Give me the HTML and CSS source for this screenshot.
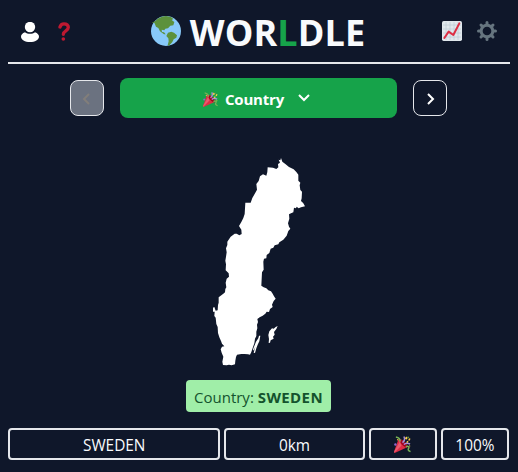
FILE: index.html
```html
<!DOCTYPE html>
<html lang="en">
<head>
<meta charset="utf-8">
<title>Worldle</title>
<link rel="stylesheet" href="styles.css">
</head>
<body>
<svg class="defs" width="0" height="0" aria-hidden="true">
  <symbol id="party" viewBox="0 0 36 36">
    <path fill="#DD2E44" d="M9 8 .2 33c-.6 1.400 1 3.200 2.400 2.600L28 24c1-4-2-8-6-12S13 5 9 8z"/>
    <path fill="#EA596E" d="M12 12 1 32l-.7 1.800c-.1.600.1 1.200.6 1.600L16 20z"/>
    <path fill="#A0041E" d="M23 13c4.500 4.700 6.700 9.700 4.800 11.300-1.800 1.600-6-1-10-5s-5-8-3.500-10S18.500 8.300 23 13z"/>
    <path fill="none" stroke="#AA8DD8" stroke-width="3.200" d="M18 14c4-3 6-7 3-13M21 18c4-4 9-3 13-1"/>
    <path fill="none" stroke="#77B255" stroke-width="3.200" d="M12 12c2-4-1-9-8-10M25 23c5-3 8 0 6 3s-1 5 4 7"/>
    <path fill="#FFCC4D" d="m26 1 3 3-3 4-3-3zM32 5l3 1-2 4-3-1zM28 10l3 2-3 3-2-2zM32 19l3 2-2 2z"/>
    <circle fill="#5C913B" cx="30" cy="3" r="2"/><circle fill="#9266CC" cx="3" cy="18" r="2.500"/><circle fill="#FFCC4D" cx="8" cy="8" r="1.500"/>
  </symbol>
</svg>
<header class="header">
  <div class="tools">
    <svg class="user" viewBox="0 0 54 60"><circle cx="27" cy="15" r="15.500"/><path d="M12 31C4 34 0 39 0 44c0 9 12 16 27 16s27-7 27-16c0-5-4-10-12-13-8 6-22 6-30 0z"/></svg>
    <svg class="question" viewBox="0 0 36 57"><path d="M6 15C8 8 12 5.500 18 5.500c8 0 13 4.500 13 10.500 0 11-15 10-15 21"/><circle cx="16" cy="51" r="5.500"/></svg>
  </div>
  <h1 class="title">
    <svg class="globe" viewBox="0 0 90 90"><circle fill="#88C9F9" cx="45" cy="45" r="45"/><path fill="#5C913B" d="M14 14C21 6 32 1 45 0l15 3 7 6-5 3 8 6-3 10-9 1-7 8-8 1-3 5-8-2 1 7 6 1 5 6-5 0-12-9-5-10-7-4-5-12-8 1zM51 50l10-3 8 3 9 8-2 7-8 5-4 8-10 11-4-1 3-12-1-9-6-7z"/></svg>
    <span class="word">WOR<span class="green">L</span>DLE</span>
  </h1>
  <div class="tools">
    <svg class="chart" viewBox="0 0 60 60"><rect width="60" height="60" rx="5" fill="#E1E8ED"/><path stroke="#BDCAD3" stroke-width="2" d="M3 12h54M3 24h54M3 36h54M3 48h54M12 3v54M24 3v54M36 3v54M48 3v54"/><path fill="none" stroke="#DD2E44" stroke-width="6" stroke-linecap="round" stroke-linejoin="round" d="m7 51 13-19 14 10L52 7"/></svg>
    <svg class="gear" viewBox="-30 -30 60 60"><circle r="17.500" fill="none" stroke="#66757F" stroke-width="9"/><path stroke="#66757F" stroke-width="9" stroke-linecap="round" d="M0-20v-5.500M0 20v5.500M-20 0h-5.500M20 0h5.500M-14-14l-4-4M14 14l4 4M14-14l4-4M-14 14l-4 4"/></svg>
  </div>
</header>
<nav class="rounds">
  <button class="step disabled"><svg class="chev" viewBox="0 0 12 12"><path d="M8 1 3 6l5 5"/></svg></button>
  <button class="picker"><svg class="party-small"><use href="#party"/></svg><span class="picker-text">Country</span><svg class="down" viewBox="0 0 12 8"><path d="m1 1 5 5 5-5"/></svg></button>
  <button class="step"><svg class="chev" viewBox="0 0 12 12"><path d="m4 1 5 5-5 5"/></svg></button>
</nav>
<main class="map">
  <svg class="sweden" viewBox="0 0 360 660"><path d="M236 29L241 31L243 24L247 35L256 42L267 51L281 58L289 66L295 74L295 92L301 98L299 106L301 120L306 125L305 145L303 153L310 160L315 169L303 172L296 175L290 170L288 175L282 173L280 187L273 190L267 193L268 206L264 220L267 230L271 236L265 243L260 257L250 269L238 277L235 283L224 286L220 293L212 296L208 309L200 315L199 325L192 326L190 335L191 359L186 367L184 407L191 412L199 415L205 421L213 424L218 431L222 439L227 446L221 453L216 464L218 471L210 477L207 486L200 485L196 491L188 497L179 502L172 507L174 516L171 524L172 535L169 545L169 558L165 566L163 580L159 591L154 606L150 614L144 613L134 612L124 612L111 614L108 621L106 632L105 643L95 646L87 644L80 646L69 645L67 635L70 620L65 608L62 598L66 590L73 589L66 581L63 573L58 562L54 549L53 531L49 522L47 503L43 498L44 485L39 485L39 473L43 471L47 482L53 481L54 465L56 458L56 442L61 438L70 431L75 427L76 417L79 412L77 398L80 386L87 380L86 370L77 361L78 343L76 332L78 320L80 307L78 295L82 285L82 275L92 260L104 251L110 251L118 256L125 252L124 239L117 228L124 216L130 204L134 192L136 158L152 158L157 144L166 128L171 119L169 102L176 93L180 79L189 73L199 77L202 66L203 52L219 53L229 57L235 52L234 42L240 38zM177 557L181 557L178 574L173 584L169 595L165 609L161 608L166 590L161 602L159 598L168 575L175 565zM233 528L229 537L222 546L224 554L219 560L221 566L212 571L210 578L206 579L207 567L205 555L208 544L216 535L221 536L227 531z"/></svg>
</main>
<div class="answer">Country: <b>SWEDEN</b></div>
<section class="guess">
  <div class="cell wide">SWEDEN</div>
  <div class="cell mid">0km</div>
  <div class="cell"><svg class="party-large"><use href="#party"/></svg></div>
  <div class="cell">100%</div>
</section>
</body>
</html>
```

FILE: styles.css
```css
* { box-sizing: border-box; }
body {
  margin: 0;
  padding: 0 8px;
  height: 472px;
  overflow: hidden;
  background: #0f172a;
  color: #f8fafc;
  font: 16px/24px "Open Sans", "Noto Sans", sans-serif;
  display: flex;
  flex-direction: column;
}
svg { display: block; flex: none; }
.defs { position: absolute; }
.header {
  height: 64px;
  border-bottom: 2px solid #e5e7eb;
  display: flex;
  align-items: center;
  justify-content: space-between;
  padding: 0 12px 0 13px;
}
.tools { display: flex; align-items: center; width: 56px; }
.user { width: 18px; height: 20px; fill: #fff; margin-top: 2px; }
.question { width: 12px; height: 19px; margin: 1px 0 0 19px; fill: #be1931; }
.question path { fill: none; stroke: #be1931; stroke-width: 10; stroke-linecap: round; }
.title { margin: 4px 3px 0 0; display: flex; align-items: center; font-size: 36px; line-height: 40px; font-weight: 700; }
.globe { width: 30px; height: 30px; margin: -5px 9px 0 0; }
.green { color: #16a34a; }
.word { letter-spacing: 0.1px; }
.chart { width: 20px; height: 20px; }
.gear { width: 20px; height: 20px; margin-left: 15px; }
.rounds { display: flex; align-items: center; justify-content: center; gap: 16px; margin-top: 14px; height: 40px; padding-right: 1px; }
button { font: inherit; color: #fff; margin: 0; padding: 0; border: 0; display: flex; align-items: center; justify-content: center; }
.step { width: 34px; height: 36px; border: 1px solid #e5e7eb; border-radius: 8px; background: none; }
.disabled { background: #6b7280; color: #827e7a; }
.chev { width: 12px; height: 12px; margin-top: 2px; }
.chev path, .down path { fill: none; stroke: currentColor; stroke-width: 2; }
.picker { width: 277px; height: 40px; padding-right: 4px; border-radius: 8px; background: #16a34a; font-weight: 700; }
.picker-text { font-size: 15px; letter-spacing: -0.2px; padding-top: 1px; }
.party-small { width: 15px; height: 15px; margin: 2px 7px 0 0; }
.down { width: 12px; height: 8px; margin-left: 14px; }
.map { height: 220px; margin-top: 32px; padding-left: 192px; }
.sweden { width: 120px; height: 220px; fill: #fff; }
.answer { width: 145px; height: 32px; margin: 10px 0 0 178px; border-radius: 4px; background: #a0eea8; color: #14532d; text-align: center; line-height: 34px; white-space: nowrap; font-size: 15px; }
.answer b { letter-spacing: 0.4px; }
.guess { display: grid; grid-template-columns: repeat(7, 1fr); gap: 4px; margin: 16px 1px 0 0; height: 32px; }
.cell { min-width: 0; height: 32px; border: 2px solid #e5e7eb; border-radius: 4px; display: flex; align-items: center; justify-content: center; padding-top: 4px; font-size: 15.400px; }
.wide { grid-column: span 3; }
.mid { grid-column: span 2; }
.party-large { width: 17px; height: 17px; margin-top: -4px; }
```
